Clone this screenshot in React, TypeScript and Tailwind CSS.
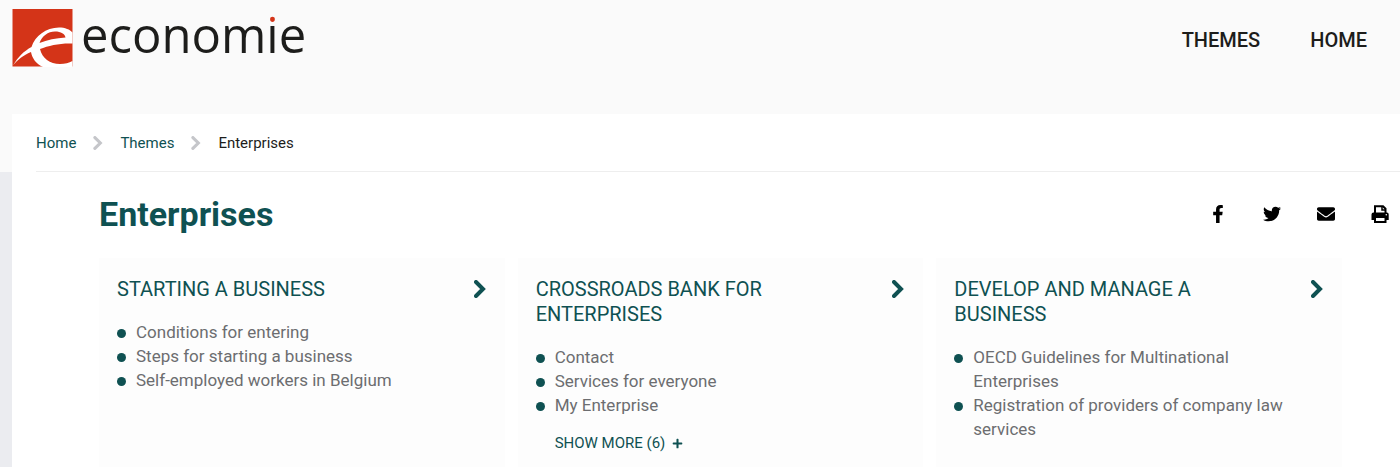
import React, { useState } from 'react';
import { FaEnvelope, FaFacebookF, FaPlus, FaTwitter } from 'react-icons/fa';

type Theme = {
  title: string;
  links: string[];
  more?: number;
};

const themes: Theme[] = [
  {
    title: 'Starting a business',
    links: ['Conditions for entering', 'Steps for starting a business', 'Self-employed workers in Belgium'],
  },
  {
    title: 'Crossroads Bank for Enterprises',
    links: ['Contact', 'Services for everyone', 'My Enterprise'],
    more: 6,
  },
  {
    title: 'Develop and manage a business',
    links: ['OECD Guidelines for Multinational Enterprises', 'Registration of providers of company law services'],
  },
];

const Logo: React.FC = () => (
  <a href="#" className="flex items-start gap-2" aria-label="economie">
    <svg width="61" height="58" viewBox="0 0 61 58" aria-hidden="true">
      <rect x="0.500" width="60" height="57.500" fill="#d43418" />
      <path
        d="M1 56.500C6 48 12 42 19.500 38C23 27 34 18.500 47 18.500C53 18.500 58 20.500 60.500 23.500V34.500C48 34 37 36.500 28 40C30 49 38 55 48 55C53 55 57 54 60.500 52V58H31C24 55 20 49 19 43C11 46.500 6 50.500 1 56.500Z"
        fill="#fff"
      />
      <path d="M27.500 34C30 27 36 22.500 43 22.500C49 22.500 53 25 53.500 28.500C44 29 35 31 27.500 34Z" fill="#d43418" />
    </svg>
    <span className="font-['Open_Sans',sans-serif] text-[49px] leading-[50px] font-medium text-[#1d1d1b]">
      econom
      <span className="bg-[linear-gradient(#d43418_23px,#1d1d1b_23px)] bg-clip-text text-transparent">i</span>e
    </span>
  </a>
);

const Chevron: React.FC<{ className: string }> = ({ className }) => (
  <svg viewBox="0 0 12 18" fill="none" stroke="currentColor" strokeWidth="4" className={className} aria-hidden="true">
    <path d="M2 2L9 9L2 16" strokeLinecap="round" />
  </svg>
);

const PrintIcon: React.FC = () => (
  <svg width="18" height="18" viewBox="0 0 18 18" aria-hidden="true">
    <path d="M4 9V1.200H12L14.500 3.700V9" fill="none" stroke="currentColor" strokeWidth="2" />
    <path d="M11 1V5H15" fill="none" stroke="currentColor" strokeWidth="1.500" />
    <path d="M2.500 7.500H15.500A2 2 0 0 1 17.700 9.500V15H0.500V9.500A2 2 0 0 1 2.500 7.500Z" fill="currentColor" />
    <rect x="4" y="12" width="10.500" height="5" fill="#fff" stroke="currentColor" strokeWidth="2" />
    <circle cx="15.300" cy="9.700" r="0.800" fill="#fff" />
  </svg>
);

const ThemeCard: React.FC<{ theme: Theme }> = ({ theme }) => {
  const [open, setOpen] = useState(false);

  return (
    <section className="bg-[#fdfdfd] px-[18px] pt-[19px] pb-6">
      <a href="#" className="flex items-start justify-between pr-px text-[#0f5152]">
        <h2 className="max-w-[280px] text-[20px] leading-[25px] uppercase">{theme.title}</h2>
        <Chevron className="mt-[3px] h-[18px] w-3" />
      </a>
      <ul className="mt-[18px] pr-3 text-[17px] leading-6 text-[#6c6d70]">
        {theme.links.map((link) => (
          <li key={link} className="flex items-start gap-[10px]">
            <span className="mt-[9px] h-[9px] w-[9px] shrink-0 rounded-full bg-[#0f5152]" />
            <a href="#">{link}</a>
          </li>
        ))}
      </ul>
      {theme.more && (
        <button
          type="button"
          aria-expanded={open}
          onClick={() => setOpen(!open)}
          className="mt-[14px] ml-[19px] flex items-center gap-[7px] text-[15px] leading-6 text-[#0f5152] uppercase"
        >
          Show more ({theme.more})
          <FaPlus className="h-[11px] w-[11px]" />
        </button>
      )}
    </section>
  );
};

const App: React.FC = () => {
  return (
    <div className="flex min-h-screen flex-col bg-[#fafafa] font-['Roboto',sans-serif]">
      <header className="flex h-[114px] items-start justify-between pt-[9px] pr-[33px] pl-3">
        <Logo />
        <nav className="flex gap-[50px] pt-[19px] text-[20px] leading-6 font-medium text-[#1d1d1b] uppercase">
          <a href="#">Themes</a>
          <a href="#">Home</a>
        </nav>
      </header>

      <main className="flex grow flex-col bg-[linear-gradient(#fafafa_58px,#ebecf0_58px)] pl-3">
        <div className="grow bg-white pl-6">
          <nav
            aria-label="Breadcrumb"
            className="flex h-[58px] items-center gap-[17px] border-b border-[#eeeeee] pt-px text-[15px] text-[#0f5152]"
          >
            <a href="#">Home</a>
            <Chevron className="h-[14px] w-[10px] text-[#c5c6ca]" />
            <a href="#">Themes</a>
            <Chevron className="h-[14px] w-[10px] text-[#c5c6ca]" />
            <span className="text-[#1d1d1b]">Enterprises</span>
          </nav>

          <div className="flex items-center justify-between pt-[21px] pr-[11px] pl-[63px]">
            <h1 className="text-[34px] leading-[42px] font-bold text-[#0f5152]">Enterprises</h1>
            <div className="flex gap-9 text-[18px] text-black">
              <a href="#" aria-label="Facebook"><FaFacebookF /></a>
              <a href="#" aria-label="Twitter"><FaTwitter /></a>
              <a href="#" aria-label="E-mail"><FaEnvelope /></a>
              <button type="button" aria-label="Print" onClick={() => window.print()}><PrintIcon /></button>
            </div>
          </div>

          <div className="mt-[23px] grid grid-cols-3 gap-[13px] pr-[58px] pl-[63px]">
            {themes.map((theme) => (
              <ThemeCard key={theme.title} theme={theme} />
            ))}
          </div>
        </div>
      </main>
    </div>
  );
};

export default App;
